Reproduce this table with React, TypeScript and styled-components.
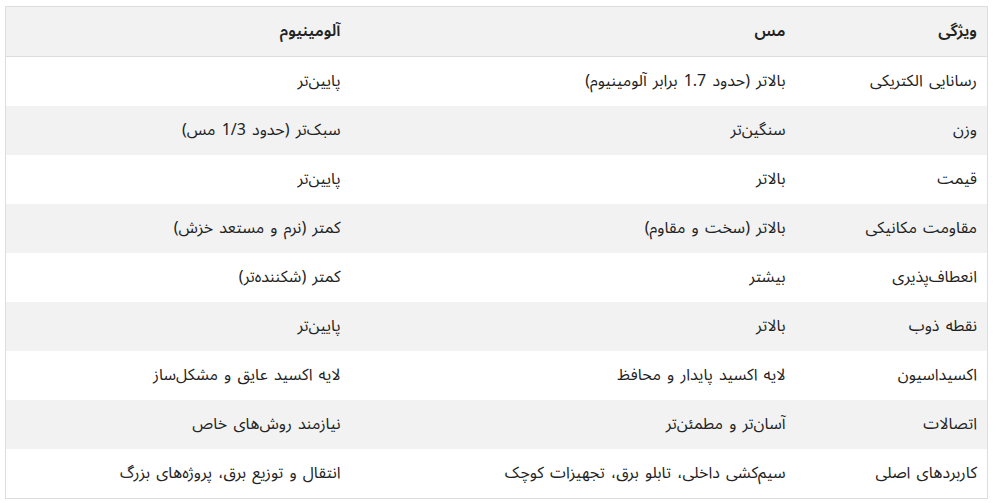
import React from 'react';
import styled, { createGlobalStyle } from 'styled-components';

const GlobalStyle = createGlobalStyle`
  body {
    margin: 0;
    background: #ffffff;
    font-family: "Noto Sans Arabic", Roboto, sans-serif;
  }
`;

const Wrapper = styled.div`
  padding: 6px 6px 0 5px;
  direction: rtl;
`;

const Table = styled.table`
  width: 100%;
  table-layout: fixed;
  border-collapse: collapse;
  border: 1px solid #dddddd;
  font-size: 16px;
  word-spacing: 2px;
  color: #222222;
`;

const Col = styled.col<{ $width?: number }>`
  width: ${(p) => (p.$width ? `${p.$width}px` : 'auto')};
`;

const HeadCell = styled.th`
  background: #f2f2f2;
  text-align: right;
  font-weight: 600;
  padding: 13px 10px;
  line-height: 23px;
  border-bottom: 1px solid #dddddd;
`;

const Row = styled.tr<{ $striped: boolean }>`
  background: ${(p) => (p.$striped ? '#f2f2f2' : '#ffffff')};
`;

const Cell = styled.td`
  text-align: right;
  padding: 13px 10px;
  line-height: 23px;
`;

const rows: [string, string, string][] = [
  ['رسانایی الکتریکی', 'بالاتر (حدود 1.7 برابر آلومینیوم)', 'پایین‌تر'],
  ['وزن', 'سنگین‌تر', 'سبک‌تر (حدود 1/3 مس)'],
  ['قیمت', 'بالاتر', 'پایین‌تر'],
  ['مقاومت مکانیکی', 'بالاتر (سخت و مقاوم)', 'کمتر (نرم و مستعد خزش)'],
  ['انعطاف‌پذیری', 'بیشتر', 'کمتر (شکننده‌تر)'],
  ['نقطه ذوب', 'بالاتر', 'پایین‌تر'],
  ['اکسیداسیون', 'لایه اکسید پایدار و محافظ', 'لایه اکسید عایق و مشکل‌ساز'],
  ['اتصالات', 'آسان‌تر و مطمئن‌تر', 'نیازمند روش‌های خاص'],
  ['کاربردهای اصلی', 'سیم‌کشی داخلی، تابلو برق، تجهیزات کوچک', 'انتقال و توزیع برق، پروژه‌های بزرگ'],
];

export default function App() {
  return (
    <>
      <GlobalStyle />
      <Wrapper>
        <Table>
          <colgroup>
            <Col $width={192} />
            <Col $width={445} />
            <Col />
          </colgroup>
          <thead>
            <tr>
              <HeadCell>ویژگی</HeadCell>
              <HeadCell>مس</HeadCell>
              <HeadCell>آلومینیوم</HeadCell>
            </tr>
          </thead>
          <tbody>
            {rows.map((r, i) => (
              <Row key={i} $striped={i % 2 === 1}>
                <Cell>{r[0]}</Cell>
                <Cell>{r[1]}</Cell>
                <Cell>{r[2]}</Cell>
              </Row>
            ))}
          </tbody>
        </Table>
      </Wrapper>
    </>
  );
}
